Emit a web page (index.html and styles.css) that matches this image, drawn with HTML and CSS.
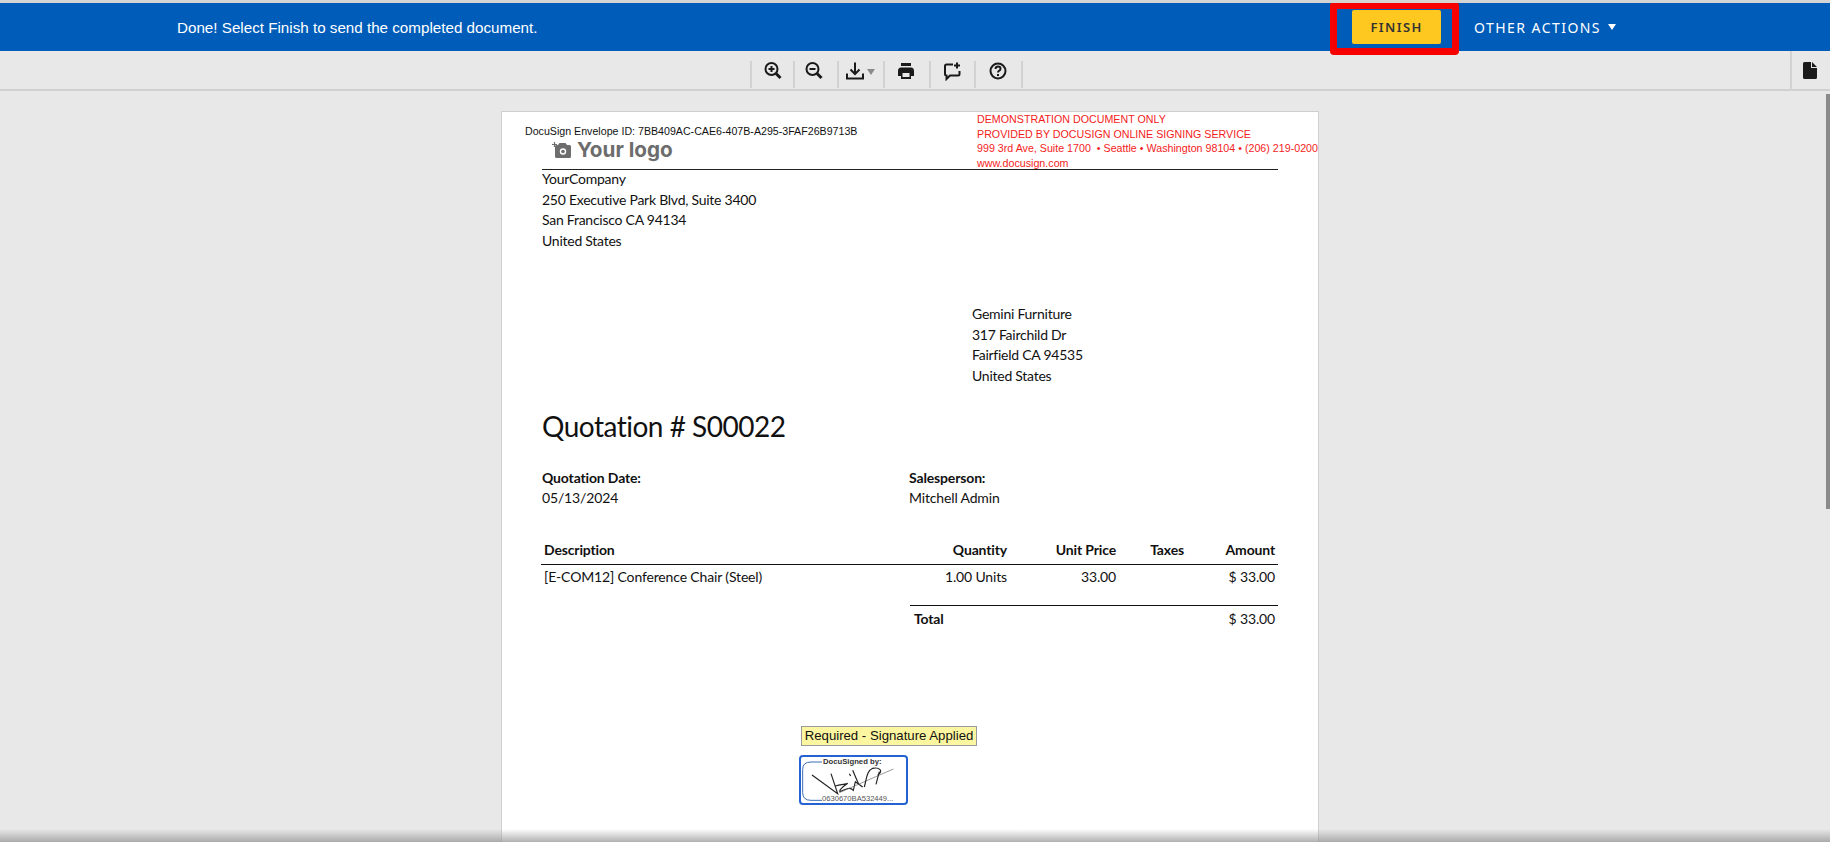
FILE: index.html
```html
<!DOCTYPE html>
<html lang="en">
<head>
    <meta charset="UTF-8">
    <title>DocuSign</title>
    <link rel="stylesheet" href="styles.css">
</head>
<body>
    <header class="action-bar">
        <span class="action-message">Done! Select Finish to send the completed document.</span>
        <button class="finish-btn">FINISH</button>
        <span class="other-actions">OTHER ACTIONS <i class="caret"></i></span>
        <div class="finish-mark"></div>
    </header>

    <nav class="toolbar">
        <div class="tool tool-a">
            <svg width="20" height="20" viewBox="0 0 20 20"><circle cx="8.5" cy="8" r="6" class="ic"/><path d="M13 12.5l4.5 4.5" class="ic ic-thick"/><path d="M5.5 8h6M8.5 5v6" class="ic"/></svg>
        </div>
        <div class="tool tool-b">
            <svg width="20" height="20" viewBox="0 0 20 20"><circle cx="8.5" cy="8" r="6" class="ic"/><path d="M13 12.5l4.5 4.5" class="ic ic-thick"/><path d="M5.5 8h6" class="ic"/></svg>
        </div>
        <div class="tool tool-c">
            <svg width="20" height="20" viewBox="0 0 20 20"><path d="M2 12.5v5h16v-5" class="ic"/><path d="M10 1.5v11M5.5 8.5l4.5 4.5 4.5-4.5" class="ic"/></svg>
            <i class="tool-caret"></i>
        </div>
        <div class="tool tool-d">
            <svg width="18" height="18" viewBox="0 0 18 18"><path d="M4 1h10v3H4zM1 9q0-3.500 3-3.500h10q3 0 3 3.500v5h-3v3H4v-3H1z" fill="#1a1a1a"/><path d="M5.500 11h7v4h-7z" fill="#e8e8e8"/></svg>
        </div>
        <div class="tool tool-e">
            <svg width="20" height="20" viewBox="0 0 20 20"><path d="M11 3.500H4.500q-1.500 0-1.500 1.500v8q0 1.500 1.500 1.500v3.500l3.500-3.500h8q1.500 0 1.500-1.500v-3" class="ic"/><path d="M15 1.500v6M12 4.500h6" class="ic"/></svg>
        </div>
        <div class="tool tool-f">
            <svg width="20" height="20" viewBox="0 0 20 20"><circle cx="10" cy="10" r="7.500" class="ic"/><path d="M7.500 8q0-2.500 2.500-2.500t2.500 2.200q0 1.300-1.300 2-1.200.7-1.200 1.800" class="ic"/><path d="M9 13h2v2H9z" fill="#1a1a1a"/></svg>
        </div>
        <div class="tool-end"></div>
        <div class="side-tab">
            <svg width="14" height="17" viewBox="0 0 14 17"><path d="M1.500 0H8v6h6v9.500q0 1.500-1.500 1.500h-11Q0 17 0 15.500v-14Q0 0 1.500 0zM9 0l5 5H9z" fill="#1a1a1a"/></svg>
        </div>
    </nav>

    <main class="viewer">
        <div class="page">
            <div class="stamp-id">DocuSign Envelope ID: 7BB409AC-CAE6-407B-A295-3FAF26B9713B</div>
            <div class="stamp-demo">
                <div>DEMONSTRATION DOCUMENT ONLY</div>
                <div>PROVIDED BY DOCUSIGN ONLINE SIGNING SERVICE</div>
                <div>999 3rd Ave, Suite 1700 &nbsp;• Seattle • Washington 98104 • (206) 219-0200</div>
                <div>www.docusign.com</div>
            </div>

            <div class="logo-row">
                <svg width="19" height="16" viewBox="0 0 19 16"><path d="M6 3l1.500-2h6L15 3h2.500Q19 3 19 4.500v10q0 1.500-1.500 1.500h-13Q3 16 3 14.500v-10Q3 3 4.500 3z" fill="#6d6d6d"/><circle cx="11" cy="9.500" r="3.200" fill="#fff"/><circle cx="11" cy="9.500" r="1.800" fill="#6d6d6d"/><path d="M2.500 0v5M0 2.500h5" stroke="#6d6d6d" stroke-width="1.200"/></svg>
                <span class="logo-text">Your logo</span>
            </div>

            <div class="address company">
                <div>YourCompany</div>
                <div>250 Executive Park Blvd, Suite 3400</div>
                <div>San Francisco CA 94134</div>
                <div>United States</div>
            </div>

            <div class="address customer">
                <div>Gemini Furniture</div>
                <div>317 Fairchild Dr</div>
                <div>Fairfield CA 94535</div>
                <div>United States</div>
            </div>

            <h1 class="doc-title">Quotation # S00022</h1>

            <div class="doc-info">
                <div class="info-col">
                    <strong>Quotation Date:</strong>
                    <div>05/13/2024</div>
                </div>
                <div class="info-col">
                    <strong>Salesperson:</strong>
                    <div>Mitchell Admin</div>
                </div>
            </div>

            <table class="lines">
                <colgroup>
                    <col class="col-desc"><col class="col-qty"><col class="col-price"><col class="col-tax"><col class="col-amount">
                </colgroup>
                <thead>
                    <tr>
                        <th class="left">Description</th>
                        <th>Quantity</th>
                        <th>Unit Price</th>
                        <th>Taxes</th>
                        <th>Amount</th>
                    </tr>
                </thead>
                <tbody>
                    <tr>
                        <td class="left">[E-COM12] Conference Chair (Steel)</td>
                        <td>1.00 Units</td>
                        <td>33.00</td>
                        <td></td>
                        <td>$ 33.00</td>
                    </tr>
                </tbody>
            </table>

            <div class="total-row">
                <strong>Total</strong>
                <span>$ 33.00</span>
            </div>

            <div class="sign-tip">Required - Signature Applied</div>
            <div class="sign-box">
                <span class="sign-head">DocuSigned by:</span>
                <svg class="sign-ink" width="109" height="50" viewBox="9 12 327 150">
                    <path d="M78 33H45Q20 33 20 55V125Q20 148 45 148H78" class="sign-bracket"/>
                    <path d="M48 72L125 128L105 68" class="ink"/>
                    <path d="M118 105C135 100 150 100 155 97C140 108 128 118 132 122C145 118 160 105 172 118L178 92L200 108" class="ink"/>
                    <path d="M160 68l4 7M170 58L188 100" class="ink"/>
                    <path d="M292 54L130 125" class="ink ink-thin"/>
                    <path d="M205 108C212 82 212 60 230 52C250 48 264 60 245 72M250 62L240 100" class="ink"/>
                </svg>
                <span class="sign-id">0630670BA532449...</span>
            </div>
        </div>
        <div class="scroll-thumb"></div>
        <div class="bottom-shade"></div>
    </main>
</body>
</html>
```

FILE: styles.css
```css
* {
    box-sizing: border-box;
}

html, body {
    height: 100%;
}

body {
    margin: 0;
    height: 842px;
    overflow: hidden;
    display: flex;
    flex-direction: column;
    background-color: #e8e8e8;
    border-top: 3px solid #d4d4d4;
    font-family: "Liberation Sans", Arial, sans-serif;
}

.action-bar {
    position: relative;
    flex: none;
    height: 48px;
    display: flex;
    align-items: center;
    padding: 0 214px 0 177px;
    background-color: #005cb9;
    color: #fff;
}

.action-message {
    font-size: 15.200px;
}

.finish-btn {
    margin-left: auto;
    width: 89px;
    height: 34px;
    border: 0;
    border-radius: 2px;
    background-color: #ffc820;
    color: #333;
    font-family: "Noto Sans", sans-serif;
    font-size: 13px;
    font-weight: 600;
    letter-spacing: 1.4px;
}

.other-actions {
    margin-left: 33px;
    font-family: "Noto Sans", sans-serif;
    font-size: 14px;
    letter-spacing: 1.45px;
    display: flex;
    align-items: center;
    gap: 7px;
}

.caret {
    width: 0;
    height: 0;
    border-left: 4px solid transparent;
    border-right: 4px solid transparent;
    border-top: 6px solid #fff;
}

.finish-mark {
    position: absolute;
    left: 1330px;
    top: -1px;
    width: 129px;
    height: 53px;
    border: 7px solid #f60000;
    border-radius: 4px;
    z-index: 2;
}

.toolbar {
    flex: none;
    height: 40px;
    display: flex;
    padding: 10px 0 2px 750px;
    background-color: #e8e8e8;
    border-bottom: 2px solid #d0d0d0;
}

.tool {
    height: 27px;
    border-left: 2px solid #d2d2d2;
    display: flex;
    align-items: flex-start;
    padding-left: 11px;
}

.tool-a { width: 43px; }
.tool-b { width: 44px; padding-left: 9px; }
.tool-c { width: 46px; padding-left: 6px; }
.tool-d { width: 46px; padding-left: 12px; padding-top: 1px; }
.tool-e { width: 45px; padding-left: 11px; }
.tool-f { width: 47px; padding-left: 12px; }

.tool-end {
    width: 2px;
    height: 27px;
    background-color: #d2d2d2;
}

.tool-caret {
    margin: 8px 0 0 2px;
    width: 0;
    height: 0;
    border-left: 4px solid transparent;
    border-right: 4px solid transparent;
    border-top: 6px solid #8a8a8a;
}

.ic {
    fill: none;
    stroke: #1a1a1a;
    stroke-width: 2;
}

.ic-thick {
    stroke-width: 3;
}

.side-tab {
    margin: -10px 0 -2px auto;
    width: 40px;
    height: 40px;
    border-left: 2px solid #d2d2d2;
    padding: 11px 0 0 11px;
}

.viewer {
    position: relative;
    flex: 1;
    overflow: hidden;
    padding: 20px 0 0 501px;
}

.page {
    position: relative;
    width: 818px;
    height: 1100px;
    padding: 0 40px 0 40px;
    background-color: #fff;
    border: 1px solid #cfcfcf;
    font-family: Lato, sans-serif;
    font-size: 14px;
    letter-spacing: -0.25px;
    line-height: 20.5px;
    color: #111;
}

.stamp-id {
    position: absolute;
    left: 23px;
    top: 12px;
    font-family: "Liberation Sans", Arial, sans-serif;
    font-size: 10.650px;
    letter-spacing: normal;
    line-height: 14px;
    white-space: nowrap;
}

.stamp-demo {
    position: absolute;
    left: 475px;
    top: 0;
    font-family: "Liberation Sans", Arial, sans-serif;
    font-size: 10.700px;
    letter-spacing: normal;
    line-height: 14.700px;
    color: #f41c1c;
    white-space: nowrap;
}

.logo-row {
    height: 58px;
    padding: 30px 0 0 10px;
    display: flex;
    align-items: flex-start;
    gap: 6px;
    border-bottom: 1px solid #222;
}

.logo-text {
    font-family: Inter, sans-serif;
    font-size: 20.700px;
    font-weight: 700;
    letter-spacing: 0;
    line-height: 16px;
    color: #6d6d6d;
}

.company {
    margin-top: -1px;
}

.customer {
    margin: 53px 0 0 430px;
}

.doc-title {
    margin: 23px 0 0;
    font-size: 28px;
    font-weight: 400;
    letter-spacing: -0.5px;
    line-height: 34px;
}

.doc-info {
    margin-top: 24.500px;
    display: flex;
    letter-spacing: -0.15px;
}

.info-col {
    width: 367px;
}

.info-col strong {
    font-weight: 700;
}

.lines {
    margin: 28.500px 0 0 -1px;
    width: 737px;
    table-layout: fixed;
    border-collapse: collapse;
    letter-spacing: -0.15px;
}

.col-desc { width: 289px; }
.col-qty { width: 180px; }
.col-price { width: 109px; }
.col-tax { width: 68px; }
.col-amount { width: 91px; }

.lines th, .lines td {
    padding: 0 3px;
    text-align: right;
    white-space: nowrap;
}

.lines th {
    height: 27px;
    font-weight: 700;
    border-bottom: 1px solid #111;
}

.lines td {
    height: 26px;
}

.lines .left {
    text-align: left;
}

.total-row {
    margin: 15px 0 0 368px;
    width: 368px;
    height: 28px;
    padding: 3px 3px 0 4px;
    display: flex;
    justify-content: space-between;
    border-top: 1px solid #111;
    letter-spacing: -0.15px;
}

.sign-tip {
    position: absolute;
    left: 299px;
    top: 614px;
    width: 176px;
    height: 20px;
    border: 1px solid #9a9a9a;
    background-color: #fdf6a0;
    font-family: "Liberation Sans", Arial, sans-serif;
    font-size: 13.200px;
    letter-spacing: normal;
    line-height: 18px;
    text-align: center;
    white-space: nowrap;
}

.sign-box {
    position: absolute;
    left: 297px;
    top: 643px;
    width: 109px;
    height: 50px;
    border: 2px solid #2463d1;
    border-radius: 4px;
    font-family: "Liberation Sans", Arial, sans-serif;
    letter-spacing: normal;
    color: #333;
    white-space: nowrap;
}

.sign-ink {
    position: absolute;
    left: -2px;
    top: -2px;
}

.sign-bracket {
    fill: none;
    stroke: #3a6db5;
    stroke-width: 3;
}

.ink {
    fill: none;
    stroke: #222;
    stroke-width: 3.500;
}

.ink-thin {
    stroke: #666;
    stroke-width: 2;
}

.sign-head {
    position: absolute;
    left: 22px;
    top: 0;
    font-size: 7.700px;
    font-weight: 700;
    line-height: 9px;
}

.sign-id {
    position: absolute;
    left: 21px;
    bottom: 0;
    font-size: 7.600px;
    line-height: 9px;
    color: #555;
}

.scroll-thumb {
    position: absolute;
    right: 0;
    top: 3px;
    width: 4px;
    height: 415px;
    background-color: #8a8a8a;
}

.bottom-shade {
    position: absolute;
    left: 0;
    right: 0;
    bottom: 0;
    height: 13px;
    background: linear-gradient(to bottom, rgba(150, 150, 150, 0), rgba(150, 150, 150, 0.75));
}
```
